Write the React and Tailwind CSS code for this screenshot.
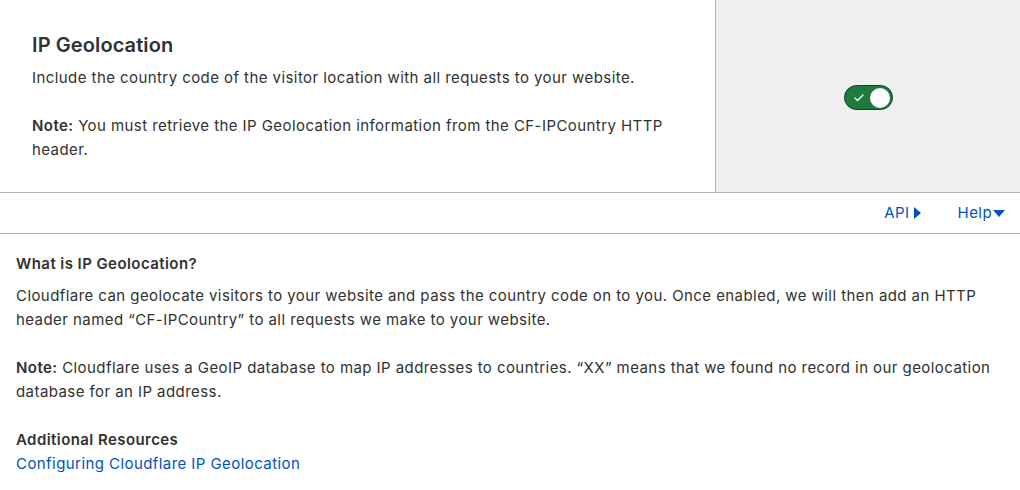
import { Check } from "lucide-react";

function Toggle() {
  return (
    <div className="flex h-[25px] w-[49px] items-center justify-between rounded-full border border-[#17402a] bg-[#1f7a3e] pl-[8px] pr-[2px]">
      <Check size={12} strokeWidth={2.5} className="text-white" />
      <span className="h-[20px] w-[20px] rounded-full bg-white" />
    </div>
  );
}

export default function App() {
  return (
    <div className="w-[1020px] bg-white text-[#313131] font-['Inter',sans-serif] tracking-[0.43px]">
      <section className="flex border-b border-[#b4b4b4]">
        <div className="flex-1 px-8 pt-[33px] pb-[30px]">
          <h2 className="text-[20px] font-semibold leading-[24px] tracking-[0.1px]">IP Geolocation</h2>
          <p className="mt-[9px] text-[15px] leading-[24px]">
            Include the country code of the visitor location with all requests to your website.
          </p>
          <p className="mt-[24px] text-[15px] leading-[24px]">
            <b className="font-semibold">Note:</b> You must retrieve the IP Geolocation information from the CF-IPCountry HTTP
            <br />
            header.
          </p>
        </div>
        <div className="flex w-[305px] justify-center border-l border-[#b4b4b4] bg-[#f0f0f0] pt-[85px]">
          <Toggle />
        </div>
      </section>

      <nav className="flex h-[41px] items-center justify-end gap-[37px] border-b border-[#b4b4b4] pr-[15px] text-[15px] text-[#0051c3]">
        <a className="flex items-center gap-[4px]">
          API
          <svg width="7" height="12" viewBox="0 0 7 12">
            <path d="M0 0L7 6L0 12Z" fill="#0051c3" />
          </svg>
        </a>
        <a className="flex items-center gap-[1px]">
          Help
          <svg width="12" height="7" viewBox="0 0 12 7">
            <path d="M0 0H12L6 7Z" fill="#0051c3" />
          </svg>
        </a>
      </nav>

      <section className="px-4 pt-[18px] pb-[14px] text-[15px] leading-[24px]">
        <h3 className="font-semibold">What is IP Geolocation?</h3>
        <p className="mt-[8px]">
          Cloudflare can geolocate visitors to your website and pass the country code on to you. Once enabled, we will then add an HTTP
          <br />
          header named “CF-IPCountry” to all requests we make to your website.
        </p>
        <p className="mt-[24px]">
          <b className="font-semibold">Note:</b> Cloudflare uses a GeoIP database to map IP addresses to countries. “XX” means that we found no record in our geolocation
          <br />
          database for an IP address.
        </p>
        <h3 className="mt-[24px] font-semibold">Additional Resources</h3>
        <a className="text-[#0051c3]">Configuring Cloudflare IP Geolocation</a>
      </section>
    </div>
  );
}
